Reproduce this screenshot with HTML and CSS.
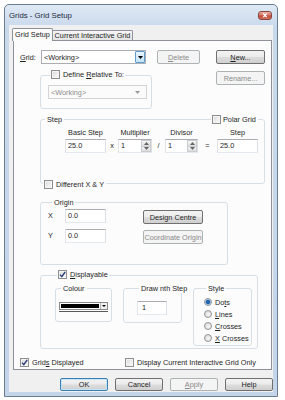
FILE: index.html
```html
<!DOCTYPE html>
<html lang="en">

<head>
    <meta charset="UTF-8">
    <title>Grids - Grid Setup</title>
    <link rel="stylesheet" href="styles.css">
</head>

<body>
    <div class="window">
        <div class="titlebar">
            <span class="title">Grids - Grid Setup</span>
            <span class="close">
                <svg width="14" height="9" viewBox="0 0 14 9"><path d="M5 2.2L9 6.4M9 2.2L5 6.4" stroke="#fff" stroke-width="1.6" fill="none"/></svg>
            </span>
        </div>

        <div class="client">
            <div class="tabs">
                <div class="tab active">Grid Setup</div>
                <div class="tab">Current Interactive Grid</div>
            </div>

            <div class="panel">
                <div class="grid-row">
                    <span class="grid-label"><u>G</u>rid:</span>
                    <div class="combo grid-combo">
                        <span class="combo-text">&lt;Working&gt;</span>
                        <span class="drop">
                            <svg width="5" height="3" viewBox="0 0 5 3"><polygon points="0,0 5,0 2.5,3" fill="#000"/></svg>
                        </span>
                    </div>
                    <button class="btn disabled delete"><u>D</u>elete</button>
                    <button class="btn new"><u>N</u>ew...</button>
                </div>

                <div class="relative-row">
                    <fieldset class="group relative">
                        <legend><label class="chk"><span class="box"></span><span>Define <u>R</u>elative To:</span></label></legend>
                        <div class="combo off">
                            <span class="combo-text">&lt;Working&gt;</span>
                            <svg width="5" height="3" viewBox="0 0 5 3"><polygon points="0,0 5,0 2.5,3" fill="#9a9a9a"/></svg>
                        </div>
                    </fieldset>
                    <button class="btn disabled rename">Rename...</button>
                </div>

                <fieldset class="group step">
                    <legend>Step</legend>
                    <label class="chk polar"><span class="box"></span><span>Polar Grid</span></label>
                    <div class="step-row">
                        <div class="col w41">
                            <span class="cap">Basic Step</span>
                            <div class="field">25.0</div>
                        </div>
                        <span class="sep s12">x</span>
                        <div class="col w34">
                            <span class="cap">Multiplier</span>
                            <div class="spin">
                                <span class="val">1</span>
                                <span class="arrows">
                                    <span class="arr"><svg width="5" height="3" viewBox="0 0 5 3"><polygon points="0,3 5,3 2.5,0" fill="#666"/></svg></span>
                                    <span class="arr"><svg width="5" height="3" viewBox="0 0 5 3"><polygon points="0,0 5,0 2.5,3" fill="#666"/></svg></span>
                                </span>
                            </div>
                        </div>
                        <span class="sep s13">/</span>
                        <div class="col w33">
                            <span class="cap">Divisor</span>
                            <div class="spin">
                                <span class="val">1</span>
                                <span class="arrows">
                                    <span class="arr"><svg width="5" height="3" viewBox="0 0 5 3"><polygon points="0,3 5,3 2.5,0" fill="#666"/></svg></span>
                                    <span class="arr"><svg width="5" height="3" viewBox="0 0 5 3"><polygon points="0,0 5,0 2.5,3" fill="#666"/></svg></span>
                                </span>
                            </div>
                        </div>
                        <span class="sep s19">=</span>
                        <div class="col w41">
                            <span class="cap">Step</span>
                            <div class="field">25.0</div>
                        </div>
                    </div>
                    <label class="chk diff-xy"><span class="box"></span><span>Different X &amp; Y</span></label>
                </fieldset>

                <fieldset class="group origin">
                    <legend>Origin</legend>
                    <div class="origin-grid">
                        <span class="axis">X</span>
                        <div class="field">0.0</div>
                        <span></span>
                        <button class="btn origin-btn">Design Centre</button>
                        <span class="axis">Y</span>
                        <div class="field">0.0</div>
                        <span></span>
                        <button class="btn disabled origin-btn">Coordinate Origin</button>
                    </div>
                </fieldset>

                <fieldset class="group display">
                    <legend><label class="chk"><span class="box checked"><svg width="7" height="7" viewBox="0 0 7 7"><path d="M1 3.6L2.8 5.6L6.2 1" stroke="#2b3f77" stroke-width="1.4" fill="none"/></svg></span><span><u>D</u>isplayable</span></label></legend>
                    <div class="display-row">
                        <fieldset class="group colour">
                            <legend>Colour</legend>
                            <div class="colour-wrap">
                                <div class="colour-combo">
                                    <span class="swatch"></span>
                                    <span class="mini-drop"><svg width="4" height="2" viewBox="0 0 4 2"><polygon points="0,0 4,0 2,2" fill="#000"/></svg></span>
                                </div>
                            </div>
                        </fieldset>
                        <fieldset class="group nth">
                            <legend>Draw nth Step</legend>
                            <div class="field nth-field">1</div>
                        </fieldset>
                        <fieldset class="group style">
                            <legend>Style</legend>
                            <label class="radio"><span class="dot on"></span><span>Do<u>t</u>s</span></label>
                            <label class="radio"><span class="dot"></span><span><u>L</u>ines</span></label>
                            <label class="radio"><span class="dot"></span><span><u>C</u>rosses</span></label>
                            <label class="radio"><span class="dot"></span><span><u>X</u> Crosses</span></label>
                        </fieldset>
                    </div>
                </fieldset>

                <div class="bottom-checks">
                    <label class="chk grids-shown"><span class="box checked"><svg width="7" height="7" viewBox="0 0 7 7"><path d="M1 3.6L2.8 5.6L6.2 1" stroke="#2b3f77" stroke-width="1.4" fill="none"/></svg></span><span>Grid<u>s</u> Displayed</span></label>
                    <label class="chk"><span class="box"></span><span>Display Current Interactive Grid Only</span></label>
                </div>
            </div>

            <div class="buttons">
                <button class="btn default">OK</button>
                <button class="btn">Cancel</button>
                <button class="btn disabled"><u>A</u>pply</button>
                <button class="btn">Help</button>
            </div>
        </div>
    </div>
</body>

</html>
```

FILE: styles.css
```css
* {
    box-sizing: border-box;
}

body {
    margin: 0;
    background: #fff;
    font-family: "Liberation Sans", Arial, sans-serif;
    font-size: 7.3px;
    line-height: 9px;
    color: #1e1e1e;
}

u {
    text-decoration: underline;
    text-underline-offset: 1px;
}

/* window frame */
.window {
    margin: 4px 0 0 4px;
    width: 274px;
    height: 393px;
    border: 1px solid #6a7d93;
    border-radius: 5px 5px 0 0;
    background: linear-gradient(#dfe9f5, #c9d9ec 22px, #c4d5e9);
    padding: 0 4px 4px 4px;
    display: flex;
    flex-direction: column;
}

.titlebar {
    height: 20px;
    display: flex;
    align-items: center;
    justify-content: space-between;
}

.title {
    font-size: 7.8px;
    color: #1b2a3d;
}

.close {
    width: 14px;
    height: 9px;
    margin-right: 1px;
    border: 1px solid #86463d;
    border-radius: 3px;
    background: linear-gradient(#eab1a4, #d7786a 45%, #c44a39 55%, #d0705d);
    display: flex;
    align-items: center;
    justify-content: center;
}

.close svg {
    display: block;
}

.client {
    flex: 1;
    background: #f0f0f0;
    padding: 3px 1px 0 4px;
}

/* tabs */
.tabs {
    display: flex;
    align-items: flex-end;
    height: 12px;
    position: relative;
    z-index: 1;
}

.tab {
    height: 10px;
    width: 80px;
    border: 1px solid #8e9199;
    border-left: none;
    border-bottom: none;
    border-radius: 0 2px 0 0;
    background: linear-gradient(#f5f5f5, #e4e4e4);
    text-align: center;
    line-height: 9px;
    white-space: nowrap;
}

.tab.active {
    width: 41px;
    height: 13px;
    margin-left: -1px;
    margin-bottom: -1px;
    border-left: 1px solid #8e9199;
    border-radius: 2px 2px 0 0;
    background: #fcfcfc;
    line-height: 11px;
}

.panel {
    height: 330px;
    border: 1px solid #8e9199;
    background: #fcfcfc;
    padding-top: 9px;
}

/* common controls */
.btn {
    font: inherit;
    color: #1e1e1e;
    padding: 0;
    height: 14px;
    border: 1px solid #707070;
    border-radius: 2px;
    background: linear-gradient(#f3f3f3, #ebebeb 48%, #dddddd 52%, #cfcfcf);
    line-height: 11px;
    white-space: nowrap;
}

.btn.disabled {
    color: #8a8a8a;
    border-color: #adb2b5;
    background: #f4f4f4;
}

.btn.default {
    border-color: #3c7fb1;
    box-shadow: inset 0 0 0 1px #c4e5f8;
}

.field {
    height: 14px;
    border: 1px solid #abadb3;
    border-color: #abadb3 #dbdfe6 #e3e9ef #e2e3ea;
    background: #fff;
    padding-left: 2px;
    line-height: 12px;
}

.combo {
    display: flex;
    align-items: center;
    height: 14px;
    border: 1px solid #abadb3;
    background: #fff;
}

.combo-text {
    flex: 1;
    padding-left: 2px;
}

.drop {
    width: 10px;
    height: 12px;
    border: 1px solid #5f9ccc;
    border-radius: 1px;
    background: linear-gradient(#eaf5fd, #c3e3f8);
    display: flex;
    align-items: center;
    justify-content: center;
}

.combo.off {
    border-color: #d3d3d3;
    background: #fbfbfb;
    color: #8d8d8d;
    padding-right: 6px;
}

.chk {
    display: inline-flex;
    align-items: center;
    gap: 3px;
    white-space: nowrap;
}

.box {
    width: 9px;
    height: 9px;
    border: 1px solid #8f8f8f;
    background: linear-gradient(135deg, #d9d9d9, #fdfdfd);
    box-shadow: inset 0 0 0 1px #f4f4f4;
    display: flex;
    align-items: center;
    justify-content: center;
}

.box svg {
    display: block;
}

.group {
    margin: 0;
    min-width: 0;
    border: 1px solid #d5dfe5;
    border-radius: 3px;
    position: relative;
}

.group legend {
    padding: 0 1px;
    margin-left: 2px;
    line-height: 9px;
    white-space: nowrap;
}

/* grid row */
.grid-row {
    display: flex;
    align-items: center;
    height: 14px;
    padding-left: 6px;
}

.grid-label {
    width: 21px;
}

.grid-combo {
    width: 105px;
}

.delete {
    width: 43px;
    margin-left: 11px;
}

.new {
    width: 49px;
    margin-left: 16px;
}

.relative-row {
    display: flex;
    align-items: flex-start;
    margin-top: 6px;
    padding-left: 26px;
}

.relative {
    width: 112px;
    padding: 4px 0 9px 7px;
}

.relative .combo {
    width: 99px;
}

.rename {
    width: 49px;
    margin: 1px 0 0 64px;
}

/* step */
.step {
    width: 225px;
    margin: 6px 0 0 26px;
    padding: 4px 0 30px 0;
}

.step legend {
    margin-left: 4px;
    padding: 0 2px;
}

.polar {
    position: absolute;
    top: -9px;
    left: 170px;
    padding: 0 2px 0 1px;
    background: #fcfcfc;
    gap: 2px;
}

.diff-xy {
    position: absolute;
    bottom: -6px;
    left: 2px;
    padding: 0 2px 0 1px;
    background: #fcfcfc;
}

.step-row {
    display: flex;
    margin-left: 24px;
}

.col {
    display: flex;
    flex-direction: column;
    align-items: center;
}

.col .field,
.col .spin {
    width: 100%;
    margin-top: 2px;
}

.cap {
    line-height: 9px;
    white-space: nowrap;
}

.w41 {
    width: 41px;
}

.w34 {
    width: 34px;
}

.w33 {
    width: 33px;
}

.sep {
    align-self: flex-end;
    height: 14px;
    line-height: 14px;
    text-align: center;
}

.s12 {
    width: 12px;
}

.s13 {
    width: 13px;
}

.s19 {
    width: 19px;
}

.spin {
    display: flex;
    height: 14px;
    border: 1px solid #abadb3;
    border-color: #abadb3 #dbdfe6 #e3e9ef #e2e3ea;
    background: #fff;
}

.val {
    flex: 1;
    padding-left: 2px;
    line-height: 12px;
}

.arrows {
    width: 10px;
    display: flex;
    flex-direction: column;
}

.arr {
    flex: 1;
    border: 1px solid #c9ccd1;
    background: linear-gradient(#f5f5f5, #dedede);
    display: flex;
    align-items: center;
    justify-content: center;
}

.arr + .arr {
    border-top: none;
}

.arr svg {
    display: block;
}

/* origin */
.origin {
    width: 188px;
    margin: 14px 0 0 26px;
    padding: 2px 0 21px 7px;
}

.origin legend {
    margin-left: 4px;
    padding: 0 2px;
}

.origin-grid {
    display: grid;
    grid-template-columns: 17px 41px 37px 60px;
    grid-auto-rows: 14px;
    row-gap: 6px;
}

.axis {
    line-height: 14px;
}

.origin-btn {
    margin-top: 1px;
}

/* displayable */
.display {
    width: 218px;
    margin: 5px 0 0 26px;
    padding: 4px 0 2px 14px;
}

.display-row {
    display: flex;
    align-items: flex-start;
    gap: 11px;
}

.colour,
.nth,
.style {
    width: 59px;
}

.colour {
    width: 57px;
    padding: 9px 0 9px 3px;
}

.colour legend,
.nth legend,
.style legend {
    margin-left: 2px;
    padding: 0 2px;
}

.colour-wrap {
    width: 49px;
    padding-bottom: 1px;
    border-bottom: 1px solid #5a5a5a;
}

.colour-combo {
    display: flex;
    height: 8px;
    border: 1px solid #8a8a8a;
    background: #fff;
}

.swatch {
    flex: 1;
    margin: 1px;
    background: #000;
}

.mini-drop {
    width: 7px;
    border-left: 1px solid #b5b5b5;
    background: #f0f0f0;
    display: flex;
    align-items: center;
    justify-content: center;
}

.mini-drop svg {
    display: block;
}

.nth {
    padding: 8px 0 7px 13px;
}

.nth-field {
    width: 30px;
    padding-left: 4px;
}

.style {
    padding: 3px 0 1px 10px;
}

.radio {
    display: flex;
    align-items: center;
    gap: 3px;
    height: 12px;
    white-space: nowrap;
}

.dot {
    width: 8px;
    height: 8px;
    border-radius: 50%;
    border: 1px solid #949494;
    background: radial-gradient(circle at 60% 60%, #f6f6f6, #d4d4d4);
}

.dot.on {
    background: radial-gradient(circle, #3a78c4 0, #1f5aa3 1.6px, #9cc7ee 2.6px, #eef4fa 3.2px);
}

.bottom-checks {
    display: flex;
    margin-top: 9px;
    padding-left: 6px;
}

.grids-shown {
    width: 105px;
}

/* dialog buttons */
.buttons {
    display: flex;
    justify-content: flex-end;
    gap: 7px;
    margin-top: 8px;
    margin-right: -1px;
}

.buttons .btn {
    width: 48px;
    height: 13px;
}
```
